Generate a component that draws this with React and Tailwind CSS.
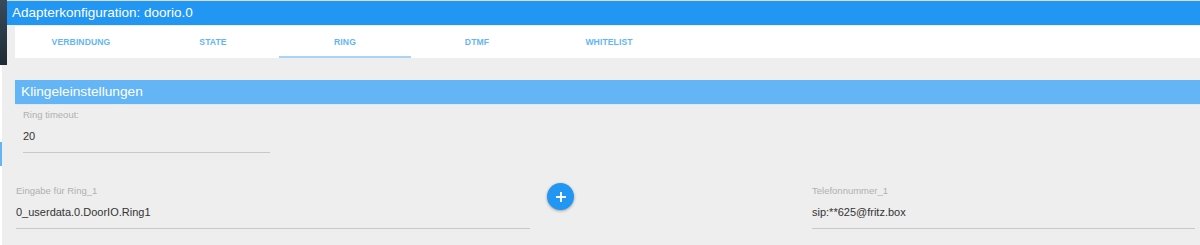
import React from "react";

const font = { fontFamily: '"Liberation Sans", Arial, sans-serif' };

function Field({ label, value, className }) {
  return (
    <div className={"flex flex-col " + className}>
      <div className="text-[9.5px] leading-[12px] text-[#b0b0b0]">{label}</div>
      <div className="mt-[8px] text-[11px] leading-[14px] text-[#333333]">{value}</div>
      <div className="mt-[9px] h-px bg-[#c8c8c8]" />
    </div>
  );
}

export default function App() {
  const tabs = ["VERBINDUNG", "STATE", "RING", "DTMF", "WHITELIST"];
  return (
    <div className="w-[1200px] h-[245px] bg-[#eeeeee] flex overflow-hidden" style={font}>
      {/* left sidebar edge */}
      <div className="w-[7px] flex flex-col shrink-0">
        <div className="h-[65px] bg-gradient-to-b from-[#3a4b5c] via-[#2b3a48] to-[#1f2a35]" />
        <div className="flex-1 flex">
          <div className="w-[2px] flex flex-col bg-white">
            <div className="h-[77px]" />
            <div className="h-[24px] bg-[#64b5f6]" />
          </div>
          <div className="flex-1 bg-[#eeeeee]" />
        </div>
      </div>

      <div className="flex-1 flex flex-col">
        <div className="h-px bg-[#dddddd]" />
        {/* title bar */}
        <div className="h-[24px] bg-[#2196f3] flex items-center pl-[5px] text-white text-[13.5px] leading-none">
          Adapterkonfiguration: doorio.0
        </div>
        {/* tabs */}
        <div className="ml-[8px] mt-px h-[32px] bg-white flex">
          {tabs.map((t) => (
            <div
              key={t}
              className={
                "w-[132px] flex items-center justify-center text-[8.6px] font-semibold text-[#64b5f6] tracking-[0.1px] " +
                (t === "RING" ? "border-b-2 border-[#a9d4f8] pt-[2px]" : "")
              }
            >
              {t}
            </div>
          ))}
        </div>

        {/* section header */}
        <div className="ml-[8px] mt-[22px] h-[24px] bg-[#64b5f6] flex items-center pl-[6px] text-white text-[13.7px] leading-none">
          Klingeleinstellungen
        </div>
        <div className="ml-[8px] h-px bg-[#d8ebfb]" />

        <Field label="Ring timeout:" value="20" className="ml-[16px] mt-[4px] w-[247px]" />

        <div className="flex items-start mt-[32px] ml-[9px]">
          <Field label="Eingabe für Ring_1" value="0_userdata.0.DoorIO.Ring1" className="w-[514px]" />
          <button className="ml-[17px] -mt-[2px] w-[27px] h-[27px] rounded-full bg-[#2196f3] flex items-center justify-center shadow-[0_1px_3px_rgba(0,0,0,0.35)]">
            <svg width="12" height="12" viewBox="0 0 12 12">
              <path d="M6 1v10M1 6h10" stroke="white" strokeWidth="1.8" />
            </svg>
          </button>
          <Field label="Telefonnummer_1" value="sip:**625@fritz.box" className="ml-[238px] w-[383px]" />
        </div>
      </div>
    </div>
  );
}
